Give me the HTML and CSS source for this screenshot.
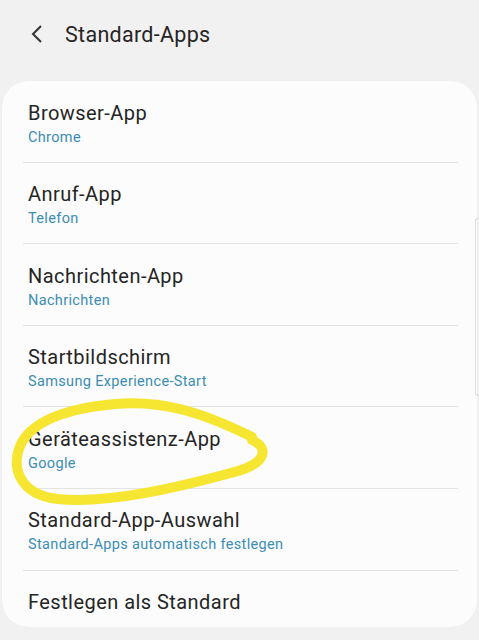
FILE: index.html
```html
<!DOCTYPE html>
<html lang="de">

<head>
    <meta charset="utf-8">
    <meta name="viewport" content="width=device-width, initial-scale=1.0">
    <title>Standard-Apps</title>
    <link rel="stylesheet" href="styles.css">
</head>

<body>
    <header class="kopf">
        <button class="tilbage" aria-label="Zurück">
            <svg width="14" height="20" viewBox="0 0 14 20">
                <path d="M11 2 L3 10 L11 18" fill="none" stroke="#333" stroke-width="2" />
            </svg>
        </button>
        <h1>Standard-Apps</h1>
    </header>

    <main class="kort">
        <ul class="liste">
            <li class="punkt">
                <p class="navn">Browser-App</p>
                <p class="vaerdi">Chrome</p>
            </li>
            <li class="punkt">
                <p class="navn">Anruf-App</p>
                <p class="vaerdi">Telefon</p>
            </li>
            <li class="punkt">
                <p class="navn">Nachrichten-App</p>
                <p class="vaerdi">Nachrichten</p>
            </li>
            <li class="punkt">
                <p class="navn">Startbildschirm</p>
                <p class="vaerdi">Samsung Experience-Start</p>
            </li>
            <li class="punkt">
                <p class="navn">Geräteassistenz-App</p>
                <p class="vaerdi">Google</p>
            </li>
            <li class="punkt">
                <p class="navn">Standard-App-Auswahl</p>
                <p class="vaerdi">Standard-Apps automatisch festlegen</p>
            </li>
            <li class="punkt sidste">
                <p class="navn">Festlegen als Standard</p>
            </li>
        </ul>
    </main>

    <!-- gul markering tegnet oven paa skærmbilledet -->
    <svg class="kringel" width="479" height="640" viewBox="0 0 479 640">
        <path d="M252 437 C200 411, 160 400, 115 404 C72 408, 36 418, 22 442 C9 467, 20 495, 58 499 C110 504, 180 487, 238 471 C268 462, 268 447, 252 440"
            fill="none" stroke="#f6e632" stroke-width="10" stroke-linecap="round" stroke-linejoin="round" />
    </svg>

    <div class="rullebar"></div>
</body>

</html>
```

FILE: styles.css
```css
body {
    margin: 0;
    background-color: #f1f1f1;
    font-family: Roboto, "Noto Sans", sans-serif;
    color: #252525;
}

.kopf {
    display: flex;
    align-items: center;
    height: 68px;
    padding-left: 30px;
}

.tilbage {
    border: none;
    background: none;
    padding: 0;
    margin: 0 21px 0 0;
    display: flex;
}

h1 {
    margin: 0;
    font-size: 21.5px;
    font-weight: normal;
    letter-spacing: 0.3px;
}

.kort {
    margin: 13px 2px 0;
    background-color: #fcfcfc;
    border-radius: 26px;
    box-shadow: 0 0 1px rgba(0, 0, 0, 0.08);
}

.liste {
    list-style: none;
    margin: 0;
    padding: 0 19px 0 21px;
}

.punkt {
    padding: 19.5px 5px 14.1px;
    border-bottom: 1px solid #e3e3e3;
}

.sidste {
    border-bottom: none;
    padding-bottom: 13px;
}

.navn {
    margin: 0;
    font-size: 20px;
    line-height: 24px;
    letter-spacing: 0.45px;
}

.vaerdi {
    margin: 3px 0 0;
    font-size: 14.5px;
    line-height: 20px;
    letter-spacing: 0.35px;
    color: #3a8db4;
}

.kringel {
    position: absolute;
    top: 0;
    left: 0;
    pointer-events: none;
}

.rullebar {
    position: absolute;
    top: 218px;
    left: 475px;
    width: 4px;
    height: 176px;
    border: 1px solid #dcdcdc;
    border-right: none;
    border-radius: 3px 0 0 3px;
}
```
